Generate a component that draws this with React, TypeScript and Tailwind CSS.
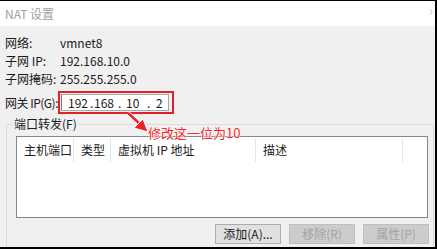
import React from 'react';

const FONT = { fontFamily: '"Microsoft YaHei", "Noto Sans CJK SC", "Liberation Sans", sans-serif' };

const INFO = [
  { label: '网络:', value: 'vmnet8' },
  { label: '子网 IP:', value: '192.168.10.0' },
  { label: '子网掩码:', value: '255.255.255.0' },
];

const COLUMNS = [
  { label: '主机端口', w: 'w-[57px]' },
  { label: '类型', w: 'w-[37px]' },
  { label: '虚拟机 IP 地址', w: 'w-[145px]' },
  { label: '描述', w: 'w-[147px]' },
];

function Button({ label, disabled }: { label: string; disabled?: boolean }) {
  return (
    <button
      className={
        disabled
          ? 'w-[66px] h-[20px] text-[12px] leading-none border border-[#bfbfbf] bg-[#cccccc] text-[#a3a3a3]'
          : 'w-[66px] h-[20px] text-[12px] leading-none border border-[#adadad] bg-[#e1e1e1] text-[#1a1a1a]'
      }
    >
      {label}
    </button>
  );
}

export default function App() {
  return (
    <div
      className="relative w-[437px] h-[249px] overflow-hidden bg-[#f0f0f0] border-t border-r-2 border-b-2 border-black flex flex-col text-[12px] text-[#1a1a1a]"
      style={FONT}
    >
      {/* title bar */}
      <div className="h-[25px] bg-white flex items-center justify-between pl-[5px] pr-[2px] text-[#a0a0a0] text-[12px] flex-shrink-0">
        <span>NAT 设置</span>
        <span className="text-[#c8c8c8] text-[13px] -mt-[6px]">›</span>
      </div>

      <div className="flex flex-col pl-[5px] pt-[8px]">
        {INFO.map(({ label, value }) => (
          <div key={label} className="h-[18px] flex items-center">
            <span className="w-[55px] whitespace-nowrap">{label}</span>
            <span>{value}</span>
          </div>
        ))}

        {/* gateway */}
        <div className="mt-[3px] h-[23px] flex items-center">
          <span className="w-[53px] shrink-0 whitespace-nowrap tracking-[-0.5px]">网关 IP(G):</span>
          <div className="w-[116px] h-[23px] border-2 border-[#e3202a] flex items-center pl-[1px]">
            <div className="w-[108px] h-[17px] bg-white border border-[#a8a8a8] border-l-[#7a7a7a] flex items-center pl-[6px]">
              <span className="w-[22px]">192</span>
              <span className="w-[4px]">.</span>
              <span className="w-[24px]">168</span>
              <span className="w-[8px]">.</span>
              <span className="w-[21px]">10</span>
              <span className="w-[9px]">.</span>
              <span>2</span>
            </div>
          </div>
        </div>

        {/* port forwarding group */}
        <div className="relative mt-[10px] ml-[1px] w-[428px] h-[130px] border-t border-l border-r border-[#dcdcdc] pt-[11px] pl-[9px] pr-[4px]">
          <span className="absolute -top-[9px] left-[6px] px-[1px] bg-[#f0f0f0] leading-[16px]">端口转发(F)</span>

          <div className="w-[412px] h-[82px] bg-white border border-[#828790]">
            <div className="h-[26px] flex">
              {COLUMNS.map(({ label, w }) => (
                <div key={label} className={`${w} h-[24px] mt-[1px] flex items-center pl-[7px] border-r border-[#e5e5e5]`}>
                  {label}
                </div>
              ))}
            </div>
          </div>

          <div className="mt-[6px] flex justify-end gap-[8px]">
            <Button label="添加(A)..." />
            <Button label="移除(R)" disabled />
            <Button label="属性(P)" disabled />
          </div>
        </div>
      </div>

      {/* annotation */}
      <svg className="absolute left-[120px] top-[105px]" width="34" height="32" viewBox="0 0 34 32">
        <line x1="8" y1="7" x2="20" y2="18" stroke="#ffffff" strokeWidth="4" />
        <line x1="8" y1="7" x2="20" y2="18" stroke="#ee2020" strokeWidth="2.4" />
        <polygon points="28,26 14,22 23,13" fill="#ee2020" stroke="#ffffff" strokeWidth="1" />
      </svg>
      <span
        className="absolute left-[148px] top-[123px] text-[13px] leading-[18px] text-[#f02828]"
        style={{ textShadow: '0 0 2px #fff, 0 0 2px #fff, 0 0 1px #fff' }}
      >
        修改这一位为10
      </span>
    </div>
  );
}
